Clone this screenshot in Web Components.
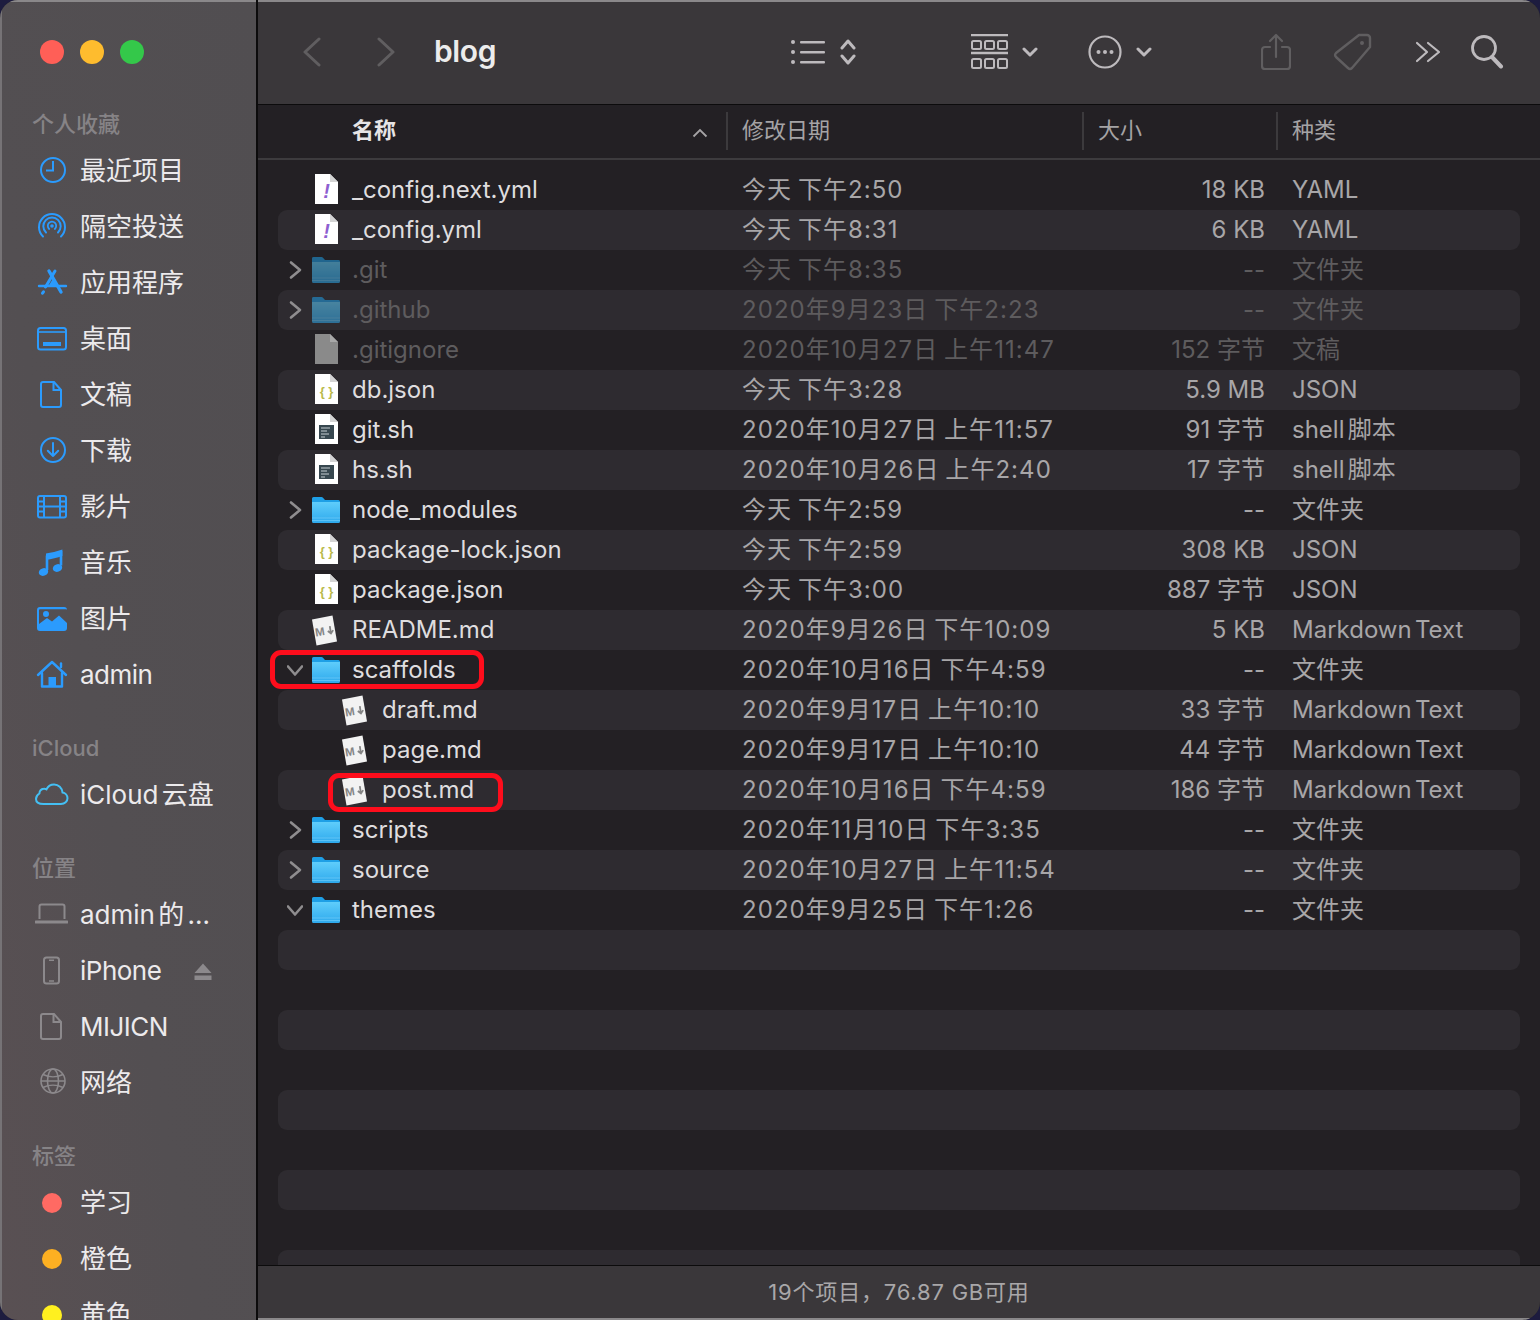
<!DOCTYPE html>
<html lang="zh">
<head>
<meta charset="utf-8">
<title>blog</title>
<style>
  html, body { margin: 0; padding: 0; width: 1540px; height: 1320px; overflow: hidden; background: #1d1c3f; }
  body { font-family: Inter, "Noto Sans CJK SC", sans-serif; }
</style>
</head>
<body>
<finder-window>
  <finder-sidebar slot="sidebar">
    <side-heading>个人收藏</side-heading>
    <side-item icon="clock">最近项目</side-item>
    <side-item icon="airdrop">隔空投送</side-item>
    <side-item icon="apps">应用程序</side-item>
    <side-item icon="desktop">桌面</side-item>
    <side-item icon="doc">文稿</side-item>
    <side-item icon="download">下载</side-item>
    <side-item icon="film">影片</side-item>
    <side-item icon="music">音乐</side-item>
    <side-item icon="picture">图片</side-item>
    <side-item icon="home" tight>admin</side-item>
    <side-heading gap>iCloud</side-heading>
    <side-item icon="cloud">iCloud 云盘</side-item>
    <side-heading gap>位置</side-heading>
    <side-item icon="laptop">admin 的 ...</side-item>
    <side-item icon="iphone" tight eject>iPhone</side-item>
    <side-item icon="docgray" tight>MIJICN</side-item>
    <side-item icon="globe">网络</side-item>
    <side-heading gap>标签</side-heading>
    <side-item dot="#ff6a63">学习</side-item>
    <side-item dot="#fdb022">橙色</side-item>
    <side-item dot="#fff01f">黄色</side-item>
  </finder-sidebar>
  <finder-toolbar slot="toolbar" title="blog"></finder-toolbar>
  <list-header slot="header"></list-header>
  <file-list slot="list">
    <file-row kind="yaml" name="_config.next.yml" date="今天 下午2:50" size="18 KB" type="YAML"></file-row>
    <file-row kind="yaml" name="_config.yml" date="今天 下午8:31" size="6 KB" type="YAML"></file-row>
    <file-row kind="folder" arrow="right" dim name=".git" date="今天 下午8:35" size="--" type="文件夹"></file-row>
    <file-row kind="folder" arrow="right" dim name=".github" date="2020年9月23日 下午2:23" size="--" type="文件夹"></file-row>
    <file-row kind="blank" dim name=".gitignore" date="2020年10月27日 上午11:47" size="152 字节" type="文稿"></file-row>
    <file-row kind="json" name="db.json" date="今天 下午3:28" size="5.9 MB" type="JSON"></file-row>
    <file-row kind="shell" name="git.sh" date="2020年10月27日 上午11:57" size="91 字节" type="shell 脚本"></file-row>
    <file-row kind="shell" name="hs.sh" date="2020年10月26日 上午2:40" size="17 字节" type="shell 脚本"></file-row>
    <file-row kind="folder" arrow="right" name="node_modules" date="今天 下午2:59" size="--" type="文件夹"></file-row>
    <file-row kind="json" name="package-lock.json" date="今天 下午2:59" size="308 KB" type="JSON"></file-row>
    <file-row kind="json" name="package.json" date="今天 下午3:00" size="887 字节" type="JSON"></file-row>
    <file-row kind="md" name="README.md" date="2020年9月26日 下午10:09" size="5 KB" type="Markdown Text"></file-row>
    <file-row kind="folder" arrow="down" mark="214" name="scaffolds" date="2020年10月16日 下午4:59" size="--" type="文件夹"></file-row>
    <file-row kind="md" indent name="draft.md" date="2020年9月17日 上午10:10" size="33 字节" type="Markdown Text"></file-row>
    <file-row kind="md" indent name="page.md" date="2020年9月17日 上午10:10" size="44 字节" type="Markdown Text"></file-row>
    <file-row kind="md" indent mark="175" name="post.md" date="2020年10月16日 下午4:59" size="186 字节" type="Markdown Text"></file-row>
    <file-row kind="folder" arrow="right" name="scripts" date="2020年11月10日 下午3:35" size="--" type="文件夹"></file-row>
    <file-row kind="folder" arrow="right" name="source" date="2020年10月27日 上午11:54" size="--" type="文件夹"></file-row>
    <file-row kind="folder" arrow="down" name="themes" date="2020年9月25日 下午1:26" size="--" type="文件夹"></file-row>
    <file-row></file-row><file-row></file-row><file-row></file-row><file-row></file-row>
    <file-row></file-row><file-row></file-row><file-row></file-row><file-row></file-row>
    <file-row></file-row><file-row></file-row>
  </file-list>
  <status-bar slot="status">19个项目，76.87 GB可用</status-bar>
</finder-window>

<script>
// window frame: sidebar on the left, toolbar / header / list / status on the right
class FinderWindow extends HTMLElement {
  constructor() {
    super();
    this.attachShadow({ mode: 'open' });
    this.shadowRoot.innerHTML = `
      <style>
        :host { display: block; width: 1540px; height: 1320px; }
        .win {
          display: flex; width: 100%; height: 100%; box-sizing: border-box;
          border-radius: 18px; overflow: hidden; background: #232024;
        }
        .side { flex: 0 0 256px; display: flex; }
        .main {
          flex: 1; min-width: 0; display: flex; flex-direction: column;
          border-left: 2px solid #0c0b0c;
        }
        .list { flex: 1; min-height: 0; display: flex; }
      </style>
      <div class="win">
        <div class="side"><slot name="sidebar"></slot></div>
        <div class="main">
          <slot name="toolbar"></slot>
          <slot name="header"></slot>
          <div class="list"><slot name="list"></slot></div>
          <slot name="status"></slot>
        </div>
      </div>`;
  }
}
customElements.define('finder-window', FinderWindow);

class FinderSidebar extends HTMLElement {
  constructor() {
    super();
    this.attachShadow({ mode: 'open' });
    this.shadowRoot.innerHTML = `
      <style>
        :host {
          display: block; width: 256px; height: 1320px; overflow: hidden; box-sizing: border-box;
          background: linear-gradient(80deg, #595053 0%, #534f52 40%, #514e51 100%);
          border-left: 2px solid #767376; border-top: 2px solid #8a888a;
          padding-top: 38px;
        }
        .lights { display: flex; gap: 16px; height: 24px; padding-left: 38px; margin-bottom: 41px; }
        .lights i { width: 24px; height: 24px; border-radius: 50%; display: block; }
      </style>
      <div class="lights">
        <i style="background:#ff5f57"></i><i style="background:#febc2e"></i><i style="background:#34c84a"></i>
      </div>
      <slot></slot>`;
  }
}
customElements.define('finder-sidebar', FinderSidebar);

class SideHeading extends HTMLElement {
  constructor() {
    super();
    this.attachShadow({ mode: 'open' });
    this.shadowRoot.innerHTML = `
      <style>
        :host {
          display: block; height: 38px; line-height: 38px; padding-left: 30px;
          font-size: 22px; font-weight: 500; color: #868386;
        }
        :host([gap]) { margin-top: 26px; }
      </style>
      <slot></slot>`;
  }
}
customElements.define('side-heading', SideHeading);

const BLUE = '#2b9bfd';
const GRAY = '#8c898c';
// sidebar icons, all in a 36x32 box centred on the text line
const SIDE_ICONS = {
  clock: `<g fill="none" stroke="${BLUE}" stroke-width="2"><circle cx="19" cy="15" r="12"/><path d="M19 6v9.5h-7"/></g>`,
  airdrop: `<g fill="none" stroke="${BLUE}" stroke-width="2" stroke-linecap="round"><path d="M9 25.5a13 13 0 1 1 18 0"/><path d="M12 21.5a8.7 8.7 0 1 1 12 0"/><path d="M15.2 18a4.2 4.2 0 1 1 5.6 0" stroke-width="1.8"/></g><circle cx="18" cy="15" r="1.8" fill="${BLUE}"/>`,
  apps: `<g fill="none" stroke="${BLUE}" stroke-linecap="round"><path d="M15 4l12 21" stroke-width="3.4"/><path d="M21 4l-9.500 16" stroke-width="3"/><path d="M5 19h27" stroke-width="2.400"/><path d="M9.500 24.800l-1 1.400" stroke-width="3"/></g><path d="M14.500 19l4.500-7.500 4.500 7.500z" fill="${BLUE}"/>`,
  desktop: `<rect x="4" y="5" width="28" height="21.5" rx="2.5" fill="none" stroke="${BLUE}" stroke-width="2"/><path d="M4 9h28" stroke="${BLUE}" stroke-width="1.6"/><rect x="9" y="19" width="18" height="4" fill="${BLUE}"/>`,
  doc: `<path d="M9 3h11l7 8v15a2 2 0 0 1-2 2H9a2 2 0 0 1-2-2V5a2 2 0 0 1 2-2z" fill="none" stroke="${BLUE}" stroke-width="2"/><path d="M19.5 3v8h7.5" fill="none" stroke="${BLUE}" stroke-width="2"/>`,
  docgray: `<path d="M9 3h11l7 8v15a2 2 0 0 1-2 2H9a2 2 0 0 1-2-2V5a2 2 0 0 1 2-2z" fill="none" stroke="${GRAY}" stroke-width="2"/><path d="M19.5 3v8h7.5" fill="none" stroke="${GRAY}" stroke-width="2"/>`,
  download: `<g fill="none" stroke="${BLUE}" stroke-width="2"><circle cx="19" cy="15" r="12"/><path d="M19 8v13M13.8 15.8l5.2 5.2 5.2-5.2" stroke-linecap="round" stroke-linejoin="round"/></g>`,
  film: `<rect x="4" y="5" width="28" height="21.5" rx="2" fill="none" stroke="${BLUE}" stroke-width="2"/><path d="M10 5v21.5M26 5v21.5M10 15.5h16M4 10.5h6M4 15.5h6M4 20.5h6M26 10.5h6M26 15.5h6M26 20.5h6" stroke="${BLUE}" stroke-width="2" fill="none"/>`,
  music: `<path d="M13 8.5v14.5M27 4v14.5" stroke="${BLUE}" stroke-width="2.6" fill="none"/><path d="M12 6.5c5-1 11-2 16.4-4V9c-5 1.800-11 3-16.400 4z" fill="${BLUE}"/><ellipse cx="9.500" cy="25" rx="4.800" ry="3.800" fill="${BLUE}" transform="rotate(-18 9.500 25)"/><ellipse cx="23.500" cy="21" rx="4.800" ry="3.800" fill="${BLUE}" transform="rotate(-18 23.500 21)"/>`,
  picture: `<path fill-rule="evenodd" fill="${BLUE}" d="M6 4h24a3 3 0 0 1 3 3v18a3 3 0 0 1-3 3H6a3 3 0 0 1-3-3V7a3 3 0 0 1 3-3z M6 6.200a1 1 0 0 0-1 1v13.800l8-6 5 3.600 7-6.100 8 7.500V7.200a1 1 0 0 0-1-1z"/><circle cx="12" cy="11" r="3" fill="${BLUE}"/>`,
  home: `<g fill="none" stroke="${BLUE}" stroke-width="2.400" stroke-linecap="round" stroke-linejoin="round"><path d="M4 16L18 3l14 13"/><path d="M8 14v13.500h20V14"/><path d="M27 8V4.500"/></g><rect x="14.500" y="18" width="7.500" height="9.500" fill="${BLUE}"/>`,
  cloud: `<path d="M9.500 25h17.500c3.800 0 6.500-2.700 6.500-5.800 0-3-2.300-5.300-5-5.700-.4-4.700-4-8-8.400-8-3.400 0-6.200 1.900-7.600 4.800-.9-.5-1.800-.8-2.800-.6-2.500.3-4.200 2.400-4.300 4.800C3.800 15.500 2 17.500 2 20c0 3 2.800 5 7.500 5z" fill="none" stroke="#44bff3" stroke-width="2"/>`,
  laptop: `<path d="M5.500 20V7.500a2 2 0 0 1 2-2h21a2 2 0 0 1 2 2V20" fill="none" stroke="${GRAY}" stroke-width="2"/><rect x="1" y="21.500" width="33" height="3" rx=".6" fill="${GRAY}"/>`,
  iphone: `<rect x="10" y="2.500" width="15" height="26" rx="2.500" fill="none" stroke="${GRAY}" stroke-width="2"/><path d="M15 5.200h5M15 26h5" stroke="${GRAY}" stroke-width="1.600"/>`,
  globe: `<g fill="none" stroke="${GRAY}" stroke-width="1.600"><circle cx="19" cy="14" r="12"/><ellipse cx="19" cy="14" rx="5.500" ry="12"/><path d="M9 7.500c6 3 14 3 20 0M9 20.500c6-3 14-3 20 0M7 14h24"/></g>`
};

class SideItem extends HTMLElement {
  constructor() {
    super();
    this.attachShadow({ mode: 'open' });
  }
  connectedCallback() {
    const dot = this.getAttribute('dot');
    const icon = dot
      ? `<svg viewBox="0 0 36 32"><circle cx="18" cy="16" r="10" fill="${dot}"/></svg>`
      : `<svg viewBox="0 0 36 32">${SIDE_ICONS[this.getAttribute('icon')]}</svg>`;
    const eject = this.hasAttribute('eject')
      ? `<svg class="eject" viewBox="0 0 18 18"><path d="M9 .5L17.500 10H.5z" fill="${GRAY}"/><rect x=".5" y="12.500" width="17" height="4.500" fill="${GRAY}"/></svg>`
      : '';
    this.shadowRoot.innerHTML = `
      <style>
        :host {
          display: flex; align-items: center; height: 56px; padding-left: 32px;
          font-size: 26px; color: #eceaec; word-spacing: -4px;
        }
        :host([tight]) { letter-spacing: -.5px; }
        svg { width: 36px; height: 32px; flex: none; margin-right: 10px; }
        .eject { width: 18px; height: 18px; margin: 2px 44px 0 auto; }
        span { white-space: nowrap; line-height: 32px; }
      </style>
      ${icon}<span><slot></slot></span>${eject}`;
  }
}
customElements.define('side-item', SideItem);

class FinderToolbar extends HTMLElement {
  constructor() {
    super();
    this.attachShadow({ mode: 'open' });
  }
  connectedCallback() {
    const on = '#bdbabd';
    const off = '#605e60';
    this.shadowRoot.innerHTML = `
      <style>
        :host {
          display: flex; align-items: center; flex: none; height: 105px; box-sizing: border-box;
          background: #3a373a; border-top: 2px solid #8a888a; padding: 0 0 2px 0;
          color: #ececec; border-bottom: 1px solid #0c0b0c;
        }
        .title { font-size: 30px; font-weight: 600; margin-left: 38px; width: 62px; letter-spacing: -.4px; line-height: 36px; margin-top: -2px; }
        svg { display: block; flex: none; }
      </style>
      <svg style="margin-left:44px" width="20" height="30" viewBox="0 0 20 30"><path d="M17 2L3 15l14 13" fill="none" stroke="${off}" stroke-width="3" stroke-linecap="round" stroke-linejoin="round"/></svg>
      <svg style="margin-left:54px" width="20" height="30" viewBox="0 0 20 30"><path d="M3 2l14 13L3 28" fill="none" stroke="${off}" stroke-width="3" stroke-linecap="round" stroke-linejoin="round"/></svg>
      <span class="title">${this.getAttribute('title')}</span>

      <svg style="margin-left:294px" width="36" height="28" viewBox="0 0 36 28"><g fill="${on}"><circle cx="3" cy="4" r="2"/><circle cx="3" cy="14" r="2"/><circle cx="3" cy="24" r="2"/><rect x="10" y="3" width="25" height="2.500" rx="1"/><rect x="10" y="13" width="25" height="2.500" rx="1"/><rect x="10" y="23" width="25" height="2.500" rx="1"/></g></svg>
      <svg style="margin-left:14px" width="16" height="28" viewBox="0 0 16 28"><path d="M2 10l6-7 6 7M2 18l6 7 6-7" fill="none" stroke="${on}" stroke-width="3" stroke-linecap="round" stroke-linejoin="round"/></svg>

      <svg style="margin-left:115px" width="38" height="36" viewBox="0 0 38 36"><g fill="none" stroke="${on}" stroke-width="2"><path d="M0 1h37M0 19h37" stroke-width="2.400"/><rect x="1" y="7" width="9" height="8" rx="1.500"/><rect x="14" y="7" width="9" height="8" rx="1.500"/><rect x="27" y="7" width="9" height="8" rx="1.500"/><rect x="1" y="25" width="9" height="9" rx="1.500"/><rect x="14" y="25" width="9" height="9" rx="1.500"/><rect x="27" y="25" width="9" height="9" rx="1.500"/></g></svg>
      <svg style="margin-left:13px" width="16" height="12" viewBox="0 0 16 12"><path d="M2 3l6 6 6-6" fill="none" stroke="${on}" stroke-width="3" stroke-linecap="round" stroke-linejoin="round"/></svg>

      <svg style="margin-left:50px" width="34" height="34" viewBox="0 0 34 34"><circle cx="17" cy="17" r="15.500" fill="none" stroke="${on}" stroke-width="2.200"/><circle cx="10.500" cy="17" r="2" fill="${on}"/><circle cx="17" cy="17" r="2" fill="${on}"/><circle cx="23.500" cy="17" r="2" fill="${on}"/></svg>
      <svg style="margin-left:14px" width="16" height="12" viewBox="0 0 16 12"><path d="M2 3l6 6 6-6" fill="none" stroke="${on}" stroke-width="3" stroke-linecap="round" stroke-linejoin="round"/></svg>

      <svg style="margin-left:109px" width="30" height="38" viewBox="0 0 30 38"><g fill="none" stroke="${off}" stroke-width="2.200" stroke-linecap="round" stroke-linejoin="round"><path d="M9 14H4a3 3 0 0 0-3 3v16a3 3 0 0 0 3 3h22a3 3 0 0 0 3-3V17a3 3 0 0 0-3-3h-5"/><path d="M15 24V2M9 8l6-6 6 6"/></g></svg>
      <svg style="margin-left:42px" width="40" height="38" viewBox="0 0 40 38"><path d="M26 2h8a3 3 0 0 1 3 3v9l-18 21a3 3 0 0 1-4 0L3 24a3 3 0 0 1 0-4z" fill="none" stroke="${off}" stroke-width="2.400" stroke-linejoin="round"/><circle cx="29" cy="10" r="2" fill="${off}"/></svg>
      <svg style="margin-left:42px" width="26" height="22" viewBox="0 0 26 22"><path d="M2 2l10 9L2 20M13 2l11 9-11 9" fill="none" stroke="${on}" stroke-width="2.200" stroke-linecap="round" stroke-linejoin="round"/></svg>
      <svg style="margin-left:29px" width="34" height="34" viewBox="0 0 34 34"><circle cx="14" cy="13" r="11.500" fill="none" stroke="${on}" stroke-width="2.800"/><path d="M22 22l9 9.500" stroke="${on}" stroke-width="4" stroke-linecap="round"/></svg>`;
  }
}
customElements.define('finder-toolbar', FinderToolbar);

class ListHeader extends HTMLElement {
  constructor() {
    super();
    this.attachShadow({ mode: 'open' });
    this.shadowRoot.innerHTML = `
      <style>
        :host {
          display: grid; flex: none; height: 55px; box-sizing: border-box;
          grid-template-columns: 468px 356px 194px 1fr;
          background: #232024; border-bottom: 2px solid #3d3b3e;
          font-size: 22px; color: #a5a3a5; align-items: center;
        }
        div { height: 38px; box-sizing: border-box; line-height: 30px; display: flex; align-items: center; padding: 0 0 2px 14px; border-left: 2px solid #3c3a3d; margin-top: -2px; }
        .name { border: 0; padding: 0 18px 2px 94px; font-weight: 600; color: #e6e4e6; justify-content: space-between; }
        svg { display: block; margin-top: 6px; }
      </style>
      <div class="name"><span>名称</span><svg width="16" height="10" viewBox="0 0 16 10"><path d="M1.500 8.500L8 2l6.500 6.500" fill="none" stroke="#a5a3a5" stroke-width="1.800"/></svg></div>
      <div>修改日期</div><div>大小</div><div>种类</div>`;
  }
}
customElements.define('list-header', ListHeader);

class FileList extends HTMLElement {
  constructor() {
    super();
    this.attachShadow({ mode: 'open' });
    this.shadowRoot.innerHTML = `
      <style>
        :host { display: block; flex: 1; min-width: 0; overflow: hidden; padding: 10px 20px 0; background: #232024; box-sizing: border-box; }
        ::slotted(file-row:nth-child(even)) { background: #2e2b30; }
      </style>
      <slot></slot>`;
  }
}
customElements.define('file-list', FileList);

const PAGE = 'M1 0h15l8 8v22H1z';
const FOLD = '<path d="M16 0l8 8h-8z" fill="#d4d4d4"/>';
const FILE_ICONS = {
  yaml: `<svg width="24" height="30" viewBox="0 0 24 30"><path d="${PAGE}" fill="#fff"/>${FOLD}<text x="12.500" y="24" font-family="Liberation Sans, sans-serif" font-style="italic" font-weight="700" font-size="20" text-anchor="middle" fill="#8e5fd0">!</text></svg>`,
  json: `<svg width="24" height="30" viewBox="0 0 24 30"><path d="${PAGE}" fill="#fff"/>${FOLD}<text x="12.500" y="22" font-family="Liberation Sans, sans-serif" font-weight="700" font-size="13" text-anchor="middle" fill="#b9b94a">{ }</text></svg>`,
  shell: `<svg width="24" height="30" viewBox="0 0 24 30"><path d="${PAGE}" fill="#fff"/>${FOLD}<rect x="5" y="11" width="15" height="14" fill="#37474f"/><path d="M7 14h9M7 17h6M7 20h8M7 23h4" stroke="#c8d0d4" stroke-width="1.200"/></svg>`,
  blank: `<svg width="24" height="30" viewBox="0 0 24 30"><path d="${PAGE}" fill="#8a8a8a"/><path d="M16 0l8 8h-8z" fill="#a8a8a8"/></svg>`,
  md: `<svg width="27" height="31" viewBox="0 0 27 31"><path d="M1 4.500l20.500-4 4.500 26-20.500 4z" fill="#f2f2f2"/><g transform="rotate(-9 13.500 16)"><text x="4" y="20" font-family="Liberation Sans, sans-serif" font-weight="700" font-size="11.500" fill="#858585">M</text><path d="M19.500 12v7M16.800 16.500l2.700 3 2.700-3" fill="none" stroke="#858585" stroke-width="1.800"/></g></svg>`,
  folder: `<svg width="28" height="26" viewBox="0 0 28 26"><defs><linearGradient id="f" x1="0" y1="0" x2="0" y2="1"><stop offset="0" stop-color="#5fcdfb"/><stop offset="1" stop-color="#2ea9ec"/></linearGradient></defs><path d="M1.500 0h8a2 2 0 0 1 1.500.8L13 3h13.500A1.500 1.500 0 0 1 28 4.500V8H0V1.500A1.500 1.500 0 0 1 1.500 0z" fill="#1e9fe6"/><path d="M0 5h28v19.500a1.500 1.500 0 0 1-1.500 1.500h-25A1.500 1.500 0 0 1 0 24.500z" fill="url(#f)"/><path d="M0 21h28M0 23.500h28" stroke="#8fdcff" stroke-opacity=".45" stroke-width="1"/></svg>`
};

class FileRow extends HTMLElement {
  constructor() {
    super();
    this.attachShadow({ mode: 'open' });
  }
  connectedCallback() {
    const kind = this.getAttribute('kind');
    let body = '';
    if (kind) {
      const arrow = this.getAttribute('arrow');
      const chev = arrow === 'right'
        ? '<svg class="chev" width="16" height="20" viewBox="0 0 16 20"><path d="M4 2.500l9 7.500-9 7.500" fill="none" stroke="#8f8d8f" stroke-width="2.600" stroke-linecap="round" stroke-linejoin="round"/></svg>'
        : arrow === 'down'
          ? '<svg class="chev" width="16" height="20" viewBox="0 0 16 20"><path d="M1 6.500l7 8 7-8" fill="none" stroke="#8f8d8f" stroke-width="2.600" stroke-linecap="round" stroke-linejoin="round"/></svg>'
          : '<span class="chev"></span>';
      const mark = this.getAttribute('mark');
      body = `
        <div class="name">
          ${mark ? `<i class="mark" style="width:${mark}px"></i>` : ''}
          ${chev}<span class="ico">${FILE_ICONS[kind]}</span>
          <span>${this.getAttribute('name')}</span>
        </div>
        <div class="date">${this.getAttribute('date')}</div>
        <div class="size">${this.getAttribute('size')}</div>
        <div class="type">${this.getAttribute('type')}</div>`;
    }
    this.shadowRoot.innerHTML = `
      <style>
        :host {
          display: grid; height: 40px; border-radius: 9px; box-sizing: border-box;
          grid-template-columns: 464px 300px 223px 1fr;
          align-items: center; font-size: 24px; line-height: 30px; color: #a8a6a8; white-space: nowrap;
        }
        .name { display: flex; align-items: center; position: relative; color: #dfdddf; height: 40px; padding-left: 9px; }
        :host([indent]) .name { padding-left: 39px; }
        .chev { width: 16px; flex: none; margin-right: 9px; }
        .ico { width: 40px; height: 40px; flex: none; display: flex; align-items: center; justify-content: flex-start; }
        .ico svg { display: block; }
        .date { letter-spacing: 1.05px; word-spacing: -2px; }
        .size { text-align: right; }
        .type { padding-left: 27px; word-spacing: -3.5px; }
        :host([kind="yaml"]) .ico, :host([kind="json"]) .ico, :host([kind="shell"]) .ico, :host([kind="blank"]) .ico { padding: 0 0 2px 2px; width: 38px; height: 38px; }
        :host([dim]) .name, :host([dim]) .date, :host([dim]) .size, :host([dim]) .type { color: #5e5c5e; }
        :host([dim][kind="folder"]) .ico svg { opacity: .55; }
        :host([kind="md"]) .ico { margin-left: -1px; width: 41px; }
        .mark { position: absolute; left: -8px; top: 0; height: 39px; box-sizing: border-box; border: 5px solid #fe0d1c; border-radius: 11px; }
        :host([indent]) .mark { left: 50px; top: 3px; }
      </style>
      ${body}`;
  }
}
customElements.define('file-row', FileRow);

class StatusBar extends HTMLElement {
  constructor() {
    super();
    this.attachShadow({ mode: 'open' });
    this.shadowRoot.innerHTML = `
      <style>
        :host {
          display: flex; flex: none; justify-content: center; align-items: center;
          height: 55px; box-sizing: border-box; background: #3a373a;
          border-top: 1px solid #0c0b0c; border-bottom: 2px solid #8a888a;
          font-size: 22px; line-height: 30px; color: #a9a7a9; letter-spacing: .8px;
        }
      </style>
      <slot></slot>`;
  }
}
customElements.define('status-bar', StatusBar);
</script>
</body>
</html>
